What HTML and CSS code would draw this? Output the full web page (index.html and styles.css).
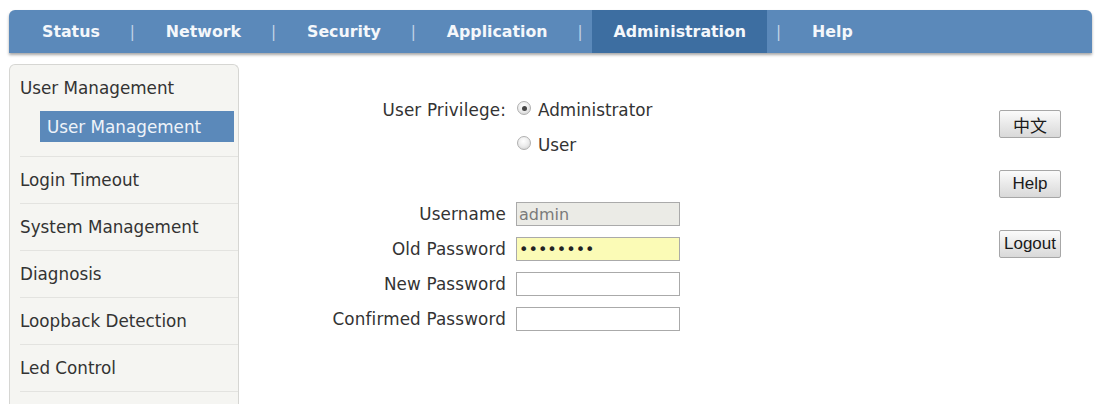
FILE: index.html
```html
<!DOCTYPE html>
<html>
<head>
<meta charset="utf-8">
<link rel="stylesheet" href="styles.css">
</head>
<body>
<div class="page">
  <nav class="topnav">
    <a class="tab">Status</a><span class="sep">|</span>
    <a class="tab">Network</a><span class="sep">|</span>
    <a class="tab">Security</a><span class="sep">|</span>
    <a class="tab">Application</a><span class="sep">|</span>
    <a class="tab active">Administration</a><span class="sep">|</span>
    <a class="tab">Help</a>
  </nav>
  <div class="body">
    <aside class="sidebar">
      <div class="group">
        <div class="group-title">User Management</div>
        <div class="sub active">User Management</div>
      </div>
      <div class="item">Login Timeout</div>
      <div class="item">System Management</div>
      <div class="item">Diagnosis</div>
      <div class="item">Loopback Detection</div>
      <div class="item">Led Control</div>
    </aside>
    <main class="main">
      <div class="form">
        <div class="priv">
          <div class="label">User Privilege:</div>
          <label class="radio-line"><input type="radio" name="priv" class="radio" checked><span>Administrator</span></label>
          <div class="label"></div>
          <label class="radio-line"><input type="radio" name="priv" class="radio"><span>User</span></label>
        </div>
        <div class="fields">
          <div class="label">Username</div>
          <input class="field disabled" type="text" value="admin" disabled>
          <div class="label">Old Password</div>
          <input class="field filled" type="password" value="12345678">
          <div class="label">New Password</div>
          <input class="field" type="password">
          <div class="label">Confirmed Password</div>
          <input class="field" type="password">
        </div>
      </div>
      <div class="actions">
        <button class="btn cjk">中文</button>
        <button class="btn">Help</button>
        <button class="btn">Logout</button>
      </div>
    </main>
  </div>
</div>
</body>
</html>
```

FILE: styles.css
```css
* { box-sizing: border-box; }
html, body { margin: 0; padding: 0; background: #fff; }
body {
  font-family: "DejaVu Sans", Verdana, sans-serif;
  color: #333;
  height: 404px;
  overflow: hidden;
}
.page {
  padding: 10px 13px 0 9px;
}
.topnav {
  height: 43px;
  background: #5b89ba;
  border-radius: 6px 6px 0 0;
  box-shadow: 0 2px 3px rgba(0,0,0,0.35);
  display: flex;
  align-items: stretch;
  padding-left: 11px;
  font-weight: bold;
  font-size: 15.8px;
  color: #fff;
}
.tab {
  display: flex;
  align-items: center;
  padding: 0 21px 0 22px;
  color: #f4f7fb;
}
.tab.active { background: #3d6ea1; }
.sep {
  width: 23px;
  display: flex;
  align-items: center;
  justify-content: center;
  font-weight: normal;
  color: #c3d4e7;
  font-size: 15px;
}
.body {
  display: flex;
  margin-top: 11px;
}
.sidebar {
  width: 230px;
  flex: none;
  height: 340px;
  background: #f5f5f2;
  border: 1px solid #d6d6d3;
  border-bottom: none;
  border-radius: 6px 6px 0 0;
  font-size: 16.8px;
}
.group, .item {
  margin-left: 10px;
  border-bottom: 1px solid #e3e3e0;
}
.group { padding-bottom: 14px; }
.group-title { height: 46px; line-height: 47px; }
.sub {
  height: 31px;
  line-height: 32px;
  margin: 0 4px 0 20px;
  padding-left: 7px;
  background: #5b89ba;
  color: #eef3f9;
}
.item { height: 47px; line-height: 47px; }
.main {
  flex: 1;
  display: flex;
  font-size: 16.8px;
}
.form {
  margin-left: 67px;
}
.priv, .fields {
  display: grid;
  grid-template-columns: 200px 164px;
  column-gap: 10px;
  grid-auto-rows: 24px;
}
.priv { margin-top: 34px; row-gap: 11px; }
.fields { margin-top: 45px; row-gap: 11px; }
.label {
  text-align: right;
  line-height: 24px;
  letter-spacing: 0.15px;
}
.radio-line {
  display: flex;
  align-items: center;
  padding-left: 1px;
}
.radio {
  appearance: none;
  -webkit-appearance: none;
  width: 14px;
  height: 14px;
  margin: -4px 7px 0 0;
  border-radius: 50%;
  border: 1px solid #b0b0b0;
  background: radial-gradient(circle at 45% 35%, #ffffff 0%, #ececec 50%, #c9c9c9 100%);
  position: relative;
}
.radio:checked::after {
  content: "";
  position: absolute;
  left: 3.5px; top: 3.5px;
  width: 5px; height: 5px;
  border-radius: 50%;
  background: #444;
}
.field {
  width: 164px;
  height: 24px;
  border: 1px solid #aaaaaa;
  background: #fff;
  padding: 0 2px;
  margin: 0;
  font-family: "DejaVu Sans", Verdana, sans-serif;
  font-size: 16px;
  color: #222;
  outline: none;
}
.field.disabled { background: #ebebe6; color: #7a7a7a; }
.field.filled { background: #fbfbb6; }
.actions {
  margin-left: auto;
  margin-right: 31px;
  padding-top: 46px;
  display: flex;
  flex-direction: column;
  gap: 32px;
}
.btn {
  width: 62px;
  height: 28px;
  padding: 0;
  border: 1px solid #a7a7a7;
  border-radius: 2px;
  background: linear-gradient(#fbfbfb, #e6e6e6 60%, #d9d9d9);
  font-family: "Liberation Sans", Arial, sans-serif;
  font-size: 17px;
  color: #1a1a1a;
}
.btn.cjk { font-family: "Liberation Sans", "Noto Sans CJK SC", sans-serif; }
```
